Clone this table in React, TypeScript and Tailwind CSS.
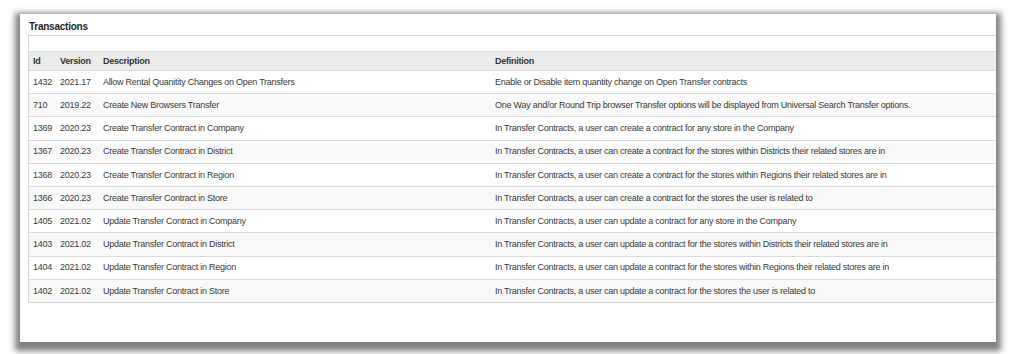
const rows = [
  ["1432", "2021.17", "Allow Rental Quanitity Changes on Open Transfers", "Enable or Disable item quantity change on Open Transfer contracts"],
  ["710", "2019.22", "Create New Browsers Transfer", "One Way and/or Round Trip browser Transfer options will be displayed from Universal Search Transfer options."],
  ["1369", "2020.23", "Create Transfer Contract in Company", "In Transfer Contracts, a user can create a contract for any store in the Company"],
  ["1367", "2020.23", "Create Transfer Contract in District", "In Transfer Contracts, a user can create a contract for the stores within Districts their related stores are in"],
  ["1368", "2020.23", "Create Transfer Contract in Region", "In Transfer Contracts, a user can create a contract for the stores within Regions their related stores are in"],
  ["1366", "2020.23", "Create Transfer Contract in Store", "In Transfer Contracts, a user can create a contract for the stores the user is related to"],
  ["1405", "2021.02", "Update Transfer Contract in Company", "In Transfer Contracts, a user can update a contract for any store in the Company"],
  ["1403", "2021.02", "Update Transfer Contract in District", "In Transfer Contracts, a user can update a contract for the stores within Districts their related stores are in"],
  ["1404", "2021.02", "Update Transfer Contract in Region", "In Transfer Contracts, a user can update a contract for the stores within Regions their related stores are in"],
  ["1402", "2021.02", "Update Transfer Contract in Store", "In Transfer Contracts, a user can update a contract for the stores the user is related to"],
];

const cols = "grid grid-cols-[27px_43px_392px_1fr]";

export default function App() {
  return (
    <div className="w-[1016px] h-[354px] bg-white pt-[14px] pl-[20px] font-[family-name:Liberation_Sans,Arial,sans-serif] text-[9px] tracking-[-0.25px] text-[#3a3a3a]">
      <div className="w-[976px] h-[328px] bg-white overflow-hidden shadow-[0_4px_6px_5px_rgba(0,0,0,0.5)]">
        {/* Title */}
        <div className="h-[21px] pl-[9px] pt-[6px] font-bold text-[10px] text-[#1f1f1f] leading-[14px]">
          Transactions
        </div>

        {/* Table */}
        <div className="ml-[8px] w-[1000px] border-l border-t border-b border-[#d4d4d4]">
          <div className="h-[16px] border-b border-[#dcdcdc]" />
          <div className={`${cols} h-[18px] pt-[1px] bg-[#ececec] items-center font-bold text-[#333]`}>
            <div className="pl-[4px]">Id</div>
            <div className="pl-[4px]">Version</div>
            <div className="pl-[4px]">Description</div>
            <div className="pl-[4px]">Definition</div>
          </div>
          {rows.map((r, i) => (
            <div
              key={r[0]}
              className={`${cols} h-[23.2px] pt-[1px] items-center border-t border-[#dcdcdc] ${
                i % 2 === 1 ? "bg-[#f9f9f9]" : "bg-white"
              }`}
            >
              {r.map((c, j) => (
                <div key={j} className="pl-[4px] whitespace-nowrap">
                  {c}
                </div>
              ))}
            </div>
          ))}
        </div>
      </div>
    </div>
  );
}
